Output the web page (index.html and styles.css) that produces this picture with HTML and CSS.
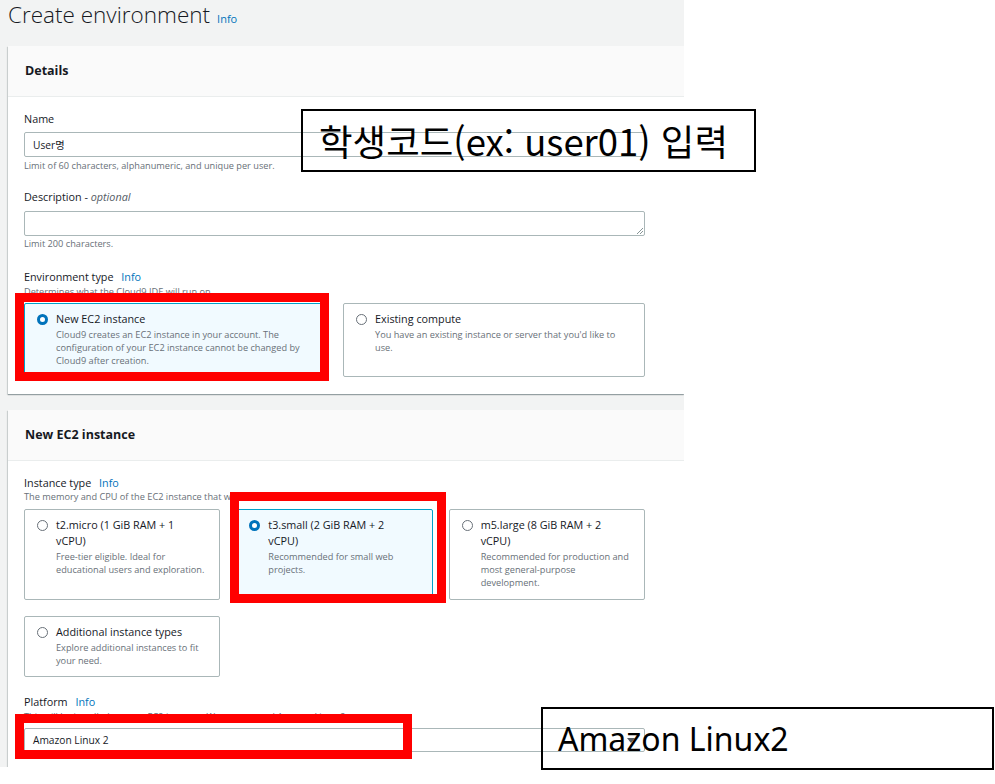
FILE: index.html
```html
<!DOCTYPE html>
<html lang="ko">
<head>
<meta charset="utf-8">
<title>Create environment</title>
<link rel="stylesheet" href="styles.css">
</head>
<body>
<div class="page">
  <div class="shot">
    <h1 class="title">Create environment <span class="info">Info</span></h1>

    <section class="card">
      <div class="card-head">Details</div>
      <div class="card-body">
        <div class="label">Name</div>
        <div class="input input-name">User명</div>
        <div class="hint hint-name">Limit of 60 characters, alphanumeric, and unique per user.</div>

        <div class="label label-gap">Description - <i>optional</i></div>
        <div class="input textarea">
          <svg class="grip" width="7" height="7" viewBox="0 0 7 7"><path d="M1 7L7 1M4 7L7 4" stroke="#879596" stroke-width="1"/></svg>
        </div>
        <div class="hint hint-desc">Limit 200 characters.</div>

        <div class="label label-gap2">Environment type <span class="link">Info</span></div>
        <div class="hint hint-under">Determines what the Cloud9 IDE will run on.</div>
        <div class="tiles tiles-env">
          <div class="tile selected">
            <span class="radio on"></span>
            <div class="tile-text">
              <div class="tile-title">New EC2 instance</div>
              <div class="tile-desc">Cloud9 creates an EC2 instance in your account. The<br>configuration of your EC2 instance cannot be changed by<br>Cloud9 after creation.</div>
            </div>
          </div>
          <div class="tile">
            <span class="radio"></span>
            <div class="tile-text">
              <div class="tile-title">Existing compute</div>
              <div class="tile-desc">You have an existing instance or server that you'd like to<br>use.</div>
            </div>
          </div>
        </div>
      </div>
    </section>

    <section class="card card-second">
      <div class="card-head">New EC2 instance</div>
      <div class="card-body">
        <div class="label">Instance type <span class="link">Info</span></div>
        <div class="hint hint-under2">The memory and CPU of the EC2 instance that will be created for Cloud9 to run on.</div>
        <div class="tiles tiles-inst">
          <div class="tile">
            <span class="radio"></span>
            <div class="tile-text">
              <div class="tile-title">t2.micro (1 GiB RAM + 1<br>vCPU)</div>
              <div class="tile-desc">Free-tier eligible. Ideal for<br>educational users and exploration.</div>
            </div>
          </div>
          <div class="tile selected">
            <span class="radio on"></span>
            <div class="tile-text">
              <div class="tile-title">t3.small (2 GiB RAM + 2<br>vCPU)</div>
              <div class="tile-desc">Recommended for small web<br>projects.</div>
            </div>
          </div>
          <div class="tile">
            <span class="radio"></span>
            <div class="tile-text">
              <div class="tile-title">m5.large (8 GiB RAM + 2<br>vCPU)</div>
              <div class="tile-desc">Recommended for production and<br>most general-purpose<br>development.</div>
            </div>
          </div>
        </div>
        <div class="tiles tiles-extra">
          <div class="tile">
            <span class="radio"></span>
            <div class="tile-text">
              <div class="tile-title">Additional instance types</div>
              <div class="tile-desc">Explore additional instances to fit<br>your need.</div>
            </div>
          </div>
        </div>

        <div class="label label-gap3">Platform <span class="link">Info</span></div>
        <div class="hint hint-under">This will be installed on your EC2 instance. We recommend Amazon Linux 2.</div>
        <div class="input select">Amazon Linux 2<span class="caret"></span></div>
      </div>
    </section>
  </div>

  <div class="mark mark-env"></div>
  <div class="mark mark-inst"></div>
  <div class="mark mark-platform"></div>

  <div class="note note-name">학생코드(ex: user01) 입력</div>
  <div class="note note-platform">Amazon Linux2</div>
</div>
</body>
</html>
```

FILE: styles.css
```css
* { box-sizing: border-box; }

body {
  margin: 0;
  background: #ffffff;
  font-family: "Open Sans", "Noto Sans", "Noto Sans CJK KR", sans-serif;
  color: #16191f;
}

.page {
  position: relative;
  width: 995px;
  height: 784px;
  overflow: hidden;
}

.shot {
  width: 684px;
  height: 767px;
  background: #f2f3f3;
  overflow: hidden;
}

.title {
  margin: 0;
  height: 46px;
  padding-left: 8px;
  display: flex;
  align-items: baseline;
  gap: 7px;
  font-size: 22.5px;
  font-weight: 300;
  line-height: 30px;
  color: #16191f;
}

.title .info {
  font-size: 11px;
  font-weight: 400;
  color: #0073bb;
}

.card {
  margin-left: 8px;
  background: #ffffff;
  box-shadow: 0 1px 1px 0 rgba(0, 28, 36, 0.3), -1px 1px 1px 0 rgba(0, 28, 36, 0.12);
}

.card-second { margin-top: 16px; }

.card-head {
  height: 51px;
  padding-left: 17px;
  padding-bottom: 2px;
  display: flex;
  align-items: center;
  background: #fafafa;
  border-bottom: 1px solid #eaeded;
  font-size: 12.5px;
  font-weight: 700;
  color: #16191f;
}

.card-body {
  padding: 15px 39px 17px 16px;
}

.label {
  font-size: 10.8px;
  line-height: 14px;
  color: #16191f;
}

.label i { color: #545b64; }

.label .link {
  color: #0073bb;
  margin-left: 5px;
}

.label-gap { margin-top: 18px; }
.label-gap2 { margin-top: 20px; }
.label-gap3 { margin-top: 18px; }

.hint {
  font-size: 9.2px;
  line-height: 12px;
  color: #687078;
  white-space: nowrap;
}

.hint-name { margin-top: 3px; }
.hint-desc { margin-top: 2px; }
.hint-under { margin-top: 2px; }
.hint-under2 { margin-top: 1px; }

.input {
  position: relative;
  height: 25px;
  margin-top: 6px;
  padding-left: 8px;
  display: flex;
  align-items: center;
  border: 1px solid #aab7b8;
  border-radius: 2px;
  background: #ffffff;
  font-size: 10.2px;
  color: #16191f;
}

.textarea { margin-top: 7px; }

.grip {
  position: absolute;
  right: 1px;
  bottom: 1px;
}

.select {
  height: 24px;
  margin-top: 5px;
}

.caret {
  position: absolute;
  right: 9px;
  top: 9px;
  width: 0;
  height: 0;
  border-left: 4px solid transparent;
  border-right: 4px solid transparent;
  border-top: 5px solid #545b64;
}

.tiles {
  display: grid;
  gap: 17px;
}

.tiles-env {
  grid-template-columns: 1fr 1fr;
  grid-auto-rows: 74px;
  margin-top: 5px;
}

.tiles-inst {
  grid-template-columns: repeat(3, 1fr);
  grid-auto-rows: 91px;
  gap: 16px;
  margin-top: 6px;
}

.tiles-extra {
  grid-template-columns: 196px;
  margin-top: 16px;
}

.tile {
  display: flex;
  gap: 8px;
  padding: 7px 12px 9px 12px;
  border: 1px solid #aab7b8;
  border-radius: 2px;
  background: #ffffff;
  white-space: nowrap;
}

.tile.selected {
  background: #f1faff;
  border-color: #00a1c9;
}

.radio {
  flex: none;
  width: 11px;
  height: 11px;
  margin-top: 2.5px;
  border: 1.2px solid #687078;
  border-radius: 50%;
  background: #ffffff;
}

.radio.on {
  border: 3.5px solid #0073bb;
}

.tile-title {
  font-size: 10.8px;
  line-height: 16px;
  color: #16191f;
}

.tile-desc {
  margin-top: 1px;
  font-size: 9.2px;
  line-height: 13px;
  color: #687078;
}

.mark {
  position: absolute;
  border: 9px solid #ff0000;
}

.mark-env { left: 15px; top: 293px; width: 314px; height: 88px; }
.mark-inst { left: 230px; top: 492px; width: 216px; height: 111px; }
.mark-platform { left: 15px; top: 714px; width: 397px; height: 45px; }

.note {
  position: absolute;
  display: flex;
  align-items: center;
  border: 2px solid #000000;
  font-family: "Noto Sans CJK KR", "Noto Sans", sans-serif;
  color: #000000;
  white-space: nowrap;
}

.note-name {
  left: 301px;
  top: 109px;
  width: 455px;
  height: 63px;
  padding-left: 16px;
  font-size: 36.5px;
}

.note-platform {
  left: 541px;
  top: 707px;
  width: 453px;
  height: 63px;
  padding-left: 15px;
  font-family: "Noto Sans", sans-serif;
  font-size: 32px;
}
```
